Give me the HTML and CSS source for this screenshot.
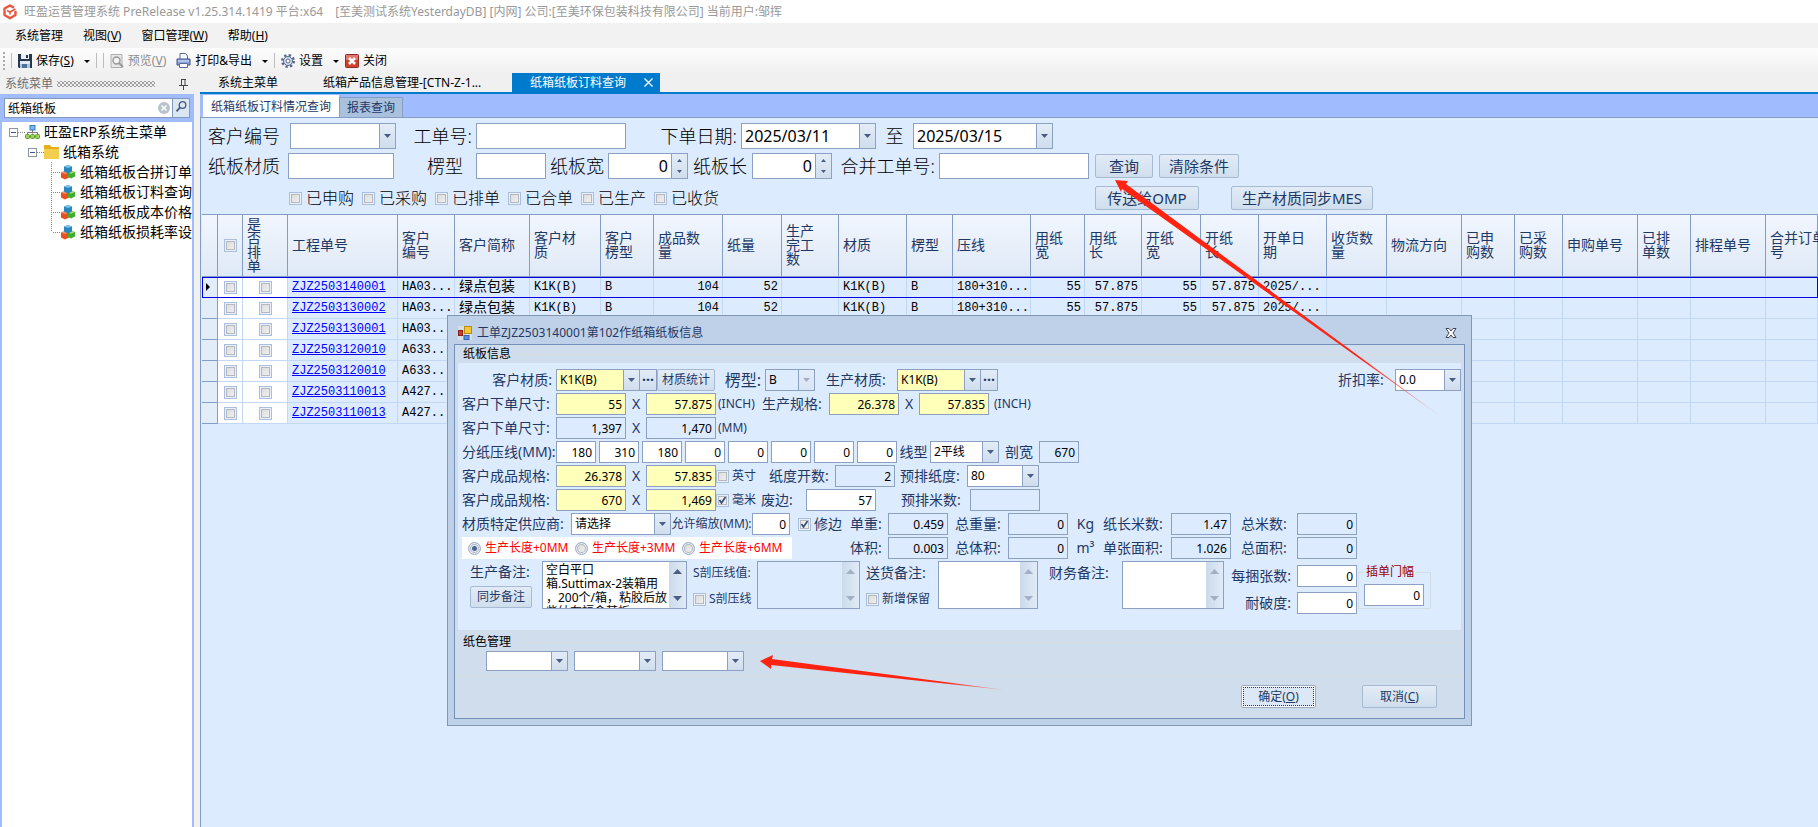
FILE: index.html
```html
<!DOCTYPE html>
<html lang="zh-CN">

<head>
  <meta charset="UTF-8">
  <meta name="viewport" content="width=device-width, initial-scale=1.0">
  <title>旺盈运营管理系统</title>
  <link rel="stylesheet" href="styles.css">
</head>

<body>
  <svg class="sprite" aria-hidden="true">
    <symbol id="cubes" viewBox="0 0 16 16">
      <path d="M1 8.5 5 7l4 1.5v5L5 15.5 1 13.5z" fill="#e8501f" />
      <path d="M1 8.5 5 7l4 1.5-4 1.7z" fill="#f98b5c" />
      <path d="M8 8.5 11.500 7 15 8v4.500L11 14.500 8 13z" fill="#3fae2a" />
      <path d="M8 8.500 11.500 7 15 8l-4 1.700z" fill="#a5e07a" />
      <path d="M4 2.500 8 1l4 1.500V7.500L8 9.500 4 7.500z" fill="#2a86bd" />
      <path d="M4 2.500 8 1l4 1.500-4 1.500z" fill="#79c4ea" />
    </symbol>
  </svg>

  <header class="titlebar">
    <svg class="logo" width="16" height="16" viewBox="0 0 16 16">
      <path d="M12 3.700 8 1.500 2.500 4.500V11L8 14.300l5.500-3.300V7" fill="none" stroke="#e9563c" stroke-width="2.400" stroke-linejoin="round" />
      <path d="M13.500 5 8 8 5 6.500M8 8v2.500" fill="none" stroke="#e9563c" stroke-width="1.600" />
    </svg>
    <span>旺盈运营管理系统 PreRelease v1.25.314.1419 平台:x64</span>
    <span>[至美测试系统YesterdayDB] [内网] 公司:[至美环保包装科技有限公司] 当前用户:邹挥</span>
  </header>

  <nav class="menubar">
    <a href="#">系统管理</a>
    <a href="#">视图(<u>V</u>)</a>
    <a href="#">窗口管理(<u>W</u>)</a>
    <a href="#">帮助(<u>H</u>)</a>
  </nav>

  <div class="toolbar">
    <i class="grip"></i>
    <i class="sep"></i>
    <button>
      <svg width="14" height="14" viewBox="0 0 14 14"><path d="M0 0h14v14H1l-1-1z" fill="#27384f" /><path d="M3 0h8v5H3z" fill="#e9f0f7" /><path d="M8 1h2v3H8z" fill="#27384f" /><path d="M2 7h10v7H2z" fill="#a9c6e6" /><path d="M2 7h10v3H2z" fill="#dfeaf6" /><path d="M4 10h5v4H4z" fill="#4d6f98" /></svg>
      保存(<u>S</u>)
    </button>
    <i class="caret"></i>
    <i class="sep"></i>
    <i class="sep"></i>
    <button class="dim">
      <svg width="14" height="14" viewBox="0 0 14 14"><path d="M1 .5h11v13H1z" fill="#e8e8e8" stroke="#b0b0b0" /><circle cx="6.500" cy="6.500" r="3.500" fill="#f4f4f4" stroke="#999" stroke-width="1.400" /><path d="m9 9 4 4" stroke="#999" stroke-width="2" /></svg>
      预览(<u>V</u>)
    </button>
    <button class="print">
      <svg width="15" height="15" viewBox="0 0 15 15"><path d="M4 .5h5.500L11.500 3v4H4z" fill="#f6f9ff" stroke="#5b6c96" /><path d="M1 6h13v6H1z" fill="#8aa5dc" stroke="#3f5288" /><path d="M2 8h11" stroke="#dbe6fb" /><path d="M3.500 10.500h8v4h-8z" fill="#fff" stroke="#5b6c96" /></svg>
      打印&amp;导出
    </button>
    <i class="caret"></i>
    <i class="sep"></i>
    <button>
      <svg width="14" height="14" viewBox="0 0 14 14"><circle cx="7" cy="7" r="5.800" fill="none" stroke="#56688a" stroke-width="2.400" stroke-dasharray="2.300 2.255" /><circle cx="7" cy="7" r="4.500" fill="#d5dff0" stroke="#56688a" /><circle cx="7" cy="7" r="2" fill="#fff" stroke="#56688a" /></svg>
      设置
    </button>
    <i class="caret"></i>
    <button>
      <svg width="14" height="14" viewBox="0 0 14 14"><rect x=".5" y=".5" width="13" height="13" rx="1" fill="#d0402f" stroke="#8f2b22" /><path d="M1 1h12v5H1z" fill="#e0776a" /><path d="m4 4 6 6m0-6-6 6" stroke="#fff" stroke-width="2.600" /></svg>
      关闭
    </button>
  </div>

  <div class="workspace">
    <aside class="dock">
      <div class="dock-head">
        <span>系统菜单</span>
        <i class="dots"></i>
        <svg width="9" height="11" viewBox="0 0 9 11"><path d="M2.500 0v6M6 0v6M2 .5h5M0 6.500h9M4.500 7v4" stroke="#444" fill="none" /></svg>
      </div>
      <div class="dock-body">
        <div class="search">
          <input type="text" value="纸箱纸板" aria-label="搜索菜单">
          <svg width="12" height="12" viewBox="0 0 12 12"><circle cx="6" cy="6" r="6" fill="#b9c2cf" /><path d="m3.500 3.500 5 5m0-5-5 5" stroke="#fff" stroke-width="1.500" /></svg>
          <button aria-label="查找"><svg width="11" height="11" viewBox="0 0 11 11"><circle cx="6.500" cy="4" r="3.300" fill="none" stroke="#44597c" stroke-width="1.300" /><path d="M4 6.500.5 10.300" stroke="#44597c" stroke-width="1.800" /></svg></button>
        </div>
        <div class="tree">
          <div class="node">
            <i class="toggle"></i><i class="twig"></i>
            <svg width="15" height="14" viewBox="0 0 15 14"><path d="M7.500 5v3.500M2.500 10V7.500h10V10" fill="none" stroke="#777" /><rect x="5" y=".5" width="5" height="4.500" fill="#7ab8f5" stroke="#3b78c4" /><rect x=".5" y="9.500" width="4" height="4" rx="1" fill="#9fd25c" stroke="#5d9a2b" /><rect x="5.500" y="9.500" width="4" height="4" rx="1" fill="#9fd25c" stroke="#5d9a2b" /><rect x="10.500" y="9.500" width="4" height="4" rx="1" fill="#9fd25c" stroke="#5d9a2b" /></svg>
            <span>旺盈ERP系统主菜单</span>
          </div>
          <div class="node sub">
            <i class="toggle"></i><i class="twig"></i>
            <svg width="15" height="14" viewBox="0 0 15 14"><path d="M0 0h6l1.500 2H15v3H0z" fill="#e5ae1c" /><path d="M0 4h15v10H0z" fill="#f3cd4d" /></svg>
            <span>纸箱系统</span>
          </div>
          <ul class="leaves">
            <li class="node"><i class="twig"></i><svg width="16" height="16"><use href="#cubes" /></svg><span>纸箱纸板合拼订单</span></li>
            <li class="node"><i class="twig"></i><svg width="16" height="16"><use href="#cubes" /></svg><span>纸箱纸板订料查询</span></li>
            <li class="node"><i class="twig"></i><svg width="16" height="16"><use href="#cubes" /></svg><span>纸箱纸板成本价格</span></li>
            <li class="node"><i class="twig"></i><svg width="16" height="16"><use href="#cubes" /></svg><span>纸箱纸板损耗率设</span></li>
          </ul>
        </div>
      </div>
    </aside>

    <main class="content">
      <nav class="tabs">
        <a href="#" class="tab tab-main">系统主菜单</a>
        <a href="#" class="tab tab-product">纸箱产品信息管理-[CTN-Z-1...</a>
        <a href="#" class="tab active">纸箱纸板订料查询
          <svg width="9" height="9" viewBox="0 0 9 9"><path d="m.5.5 8 8m0-8-8 8" stroke="#fff" stroke-width="1.300" /></svg>
        </a>
      </nav>
      <nav class="subtabs">
        <a href="#" class="active">纸箱纸板订料情况查询</a>
        <a href="#">报表查询</a>
      </nav>

      <form class="page">
        <section class="filters">
          <div class="filter-row">
            <label class="w82" for="f-cust">客户编号</label>
            <select id="f-cust" class="w106"><option></option></select>
            <label class="w80 end" for="f-order">工单号:</label>
            <input id="f-order" class="w150" type="text">
            <label class="w115 end" for="f-from">下单日期:</label>
            <input id="f-from" class="combo w135" type="text" value="2025/03/11">
            <label class="w37 mid" for="f-to">至</label>
            <input id="f-to" class="combo w140" type="text" value="2025/03/15">
          </div>
          <div class="filter-row">
            <label class="w80" for="f-mat">纸板材质</label>
            <input id="f-mat" class="w106" type="text">
            <label class="w82 flute" for="f-flute">楞型</label>
            <input id="f-flute" class="w70" type="text">
            <label class="w62 mid" for="f-width">纸板宽</label>
            <input id="f-width" class="spin w80" type="text" value="0">
            <label class="w64 mid" for="f-length">纸板长</label>
            <input id="f-length" class="spin w80" type="text" value="0">
            <label class="w107 end" for="f-merge">合并工单号:</label>
            <input id="f-merge" class="w150" type="text">
            <button type="button" class="btn query">查询</button>
            <button type="button" class="btn clear">清除条件</button>
          </div>
          <div class="filter-row last">
            <div class="checks">
              <label><input type="checkbox">已申购</label>
              <label><input type="checkbox">已采购</label>
              <label><input type="checkbox">已排单</label>
              <label><input type="checkbox">已合单</label>
              <label><input type="checkbox">已生产</label>
              <label><input type="checkbox">已收货</label>
            </div>
            <button type="button" class="btn omp">传送给OMP</button>
            <button type="button" class="btn mes">生产材质同步MES</button>
          </div>
        </section>

        <table class="grid">
          <colgroup>
            <col class="w16"><col class="w25"><col class="w45"><col class="w110"><col class="w57"><col class="w75"><col class="w71"><col class="w53"><col class="w69"><col class="w59"><col class="w57"><col class="w68"><col class="w46"><col class="w78"><col class="w54"><col class="w57"><col class="w59"><col class="w58"><col class="w68"><col class="w60"><col class="w75"><col class="w53"><col class="w48"><col class="w75"><col class="w53"><col class="w75"><col>
          </colgroup>
          <thead>
            <tr>
              <th></th>
              <th class="pick"><input type="checkbox" aria-label="全选"></th>
              <th>是<br>否<br>排<br>单</th>
              <th>工程单号</th>
              <th>客户<br>编号</th>
              <th>客户简称</th>
              <th>客户材<br>质</th>
              <th>客户<br>楞型</th>
              <th>成品数<br>量</th>
              <th>纸量</th>
              <th>生产<br>完工<br>数</th>
              <th>材质</th>
              <th>楞型</th>
              <th>压线</th>
              <th>用纸<br>宽</th>
              <th>用纸<br>长</th>
              <th>开纸<br>宽</th>
              <th>开纸<br>长</th>
              <th>开单日<br>期</th>
              <th>收货数<br>量</th>
              <th>物流方向</th>
              <th>已申<br>购数</th>
              <th>已采<br>购数</th>
              <th>申购单号</th>
              <th>已排<br>单数</th>
              <th>排程单号</th>
              <th>合并订单<br>号</th>
            </tr>
          </thead>
          <tbody>
            <tr class="current">
              <td><i class="marker"></i></td>
              <td class="pick"><input type="checkbox" aria-label="选择"></td>
              <td class="pick"><input type="checkbox" aria-label="是否排单"></td>
              <td><a href="#">ZJZ2503140001</a></td><td>HA03...</td><td>绿点包装</td><td>K1K(B)</td><td>B</td><td class="num">104</td><td class="num">52</td><td></td><td>K1K(B)</td><td>B</td><td>180+310...</td><td class="num">55</td><td class="num">57.875</td><td class="num">55</td><td class="num">57.875</td><td>2025/...</td><td></td><td></td><td></td><td></td><td></td><td></td><td></td><td></td>
            </tr>
            <tr>
              <td></td>
              <td class="pick"><input type="checkbox" aria-label="选择"></td>
              <td class="pick"><input type="checkbox" aria-label="是否排单"></td>
              <td><a href="#">ZJZ2503130002</a></td><td>HA03...</td><td>绿点包装</td><td>K1K(B)</td><td>B</td><td class="num">104</td><td class="num">52</td><td></td><td>K1K(B)</td><td>B</td><td>180+310...</td><td class="num">55</td><td class="num">57.875</td><td class="num">55</td><td class="num">57.875</td><td>2025/...</td><td></td><td></td><td></td><td></td><td></td><td></td><td></td><td></td>
            </tr>
            <tr>
              <td></td>
              <td class="pick"><input type="checkbox" aria-label="选择"></td>
              <td class="pick"><input type="checkbox" aria-label="是否排单"></td>
              <td><a href="#">ZJZ2503130001</a></td><td>HA03...</td><td></td><td></td><td></td><td></td><td></td><td></td><td></td><td></td><td></td><td></td><td></td><td></td><td></td><td></td><td></td><td></td><td></td><td></td><td></td><td></td><td></td><td></td>
            </tr>
            <tr>
              <td></td>
              <td class="pick"><input type="checkbox" aria-label="选择"></td>
              <td class="pick"><input type="checkbox" aria-label="是否排单"></td>
              <td><a href="#">ZJZ2503120010</a></td><td>A633...</td><td></td><td></td><td></td><td></td><td></td><td></td><td></td><td></td><td></td><td></td><td></td><td></td><td></td><td></td><td></td><td></td><td></td><td></td><td></td><td></td><td></td><td></td>
            </tr>
            <tr>
              <td></td>
              <td class="pick"><input type="checkbox" aria-label="选择"></td>
              <td class="pick"><input type="checkbox" aria-label="是否排单"></td>
              <td><a href="#">ZJZ2503120010</a></td><td>A633...</td><td></td><td></td><td></td><td></td><td></td><td></td><td></td><td></td><td></td><td></td><td></td><td></td><td></td><td></td><td></td><td></td><td></td><td></td><td></td><td></td><td></td><td></td>
            </tr>
            <tr>
              <td></td>
              <td class="pick"><input type="checkbox" aria-label="选择"></td>
              <td class="pick"><input type="checkbox" aria-label="是否排单"></td>
              <td><a href="#">ZJZ2503110013</a></td><td>A427...</td><td></td><td></td><td></td><td></td><td></td><td></td><td></td><td></td><td></td><td></td><td></td><td></td><td></td><td></td><td></td><td></td><td></td><td></td><td></td><td></td><td></td><td></td>
            </tr>
            <tr>
              <td></td>
              <td class="pick"><input type="checkbox" aria-label="选择"></td>
              <td class="pick"><input type="checkbox" aria-label="是否排单"></td>
              <td><a href="#">ZJZ2503110013</a></td><td>A427...</td><td></td><td></td><td></td><td></td><td></td><td></td><td></td><td></td><td></td><td></td><td></td><td></td><td></td><td></td><td></td><td></td><td></td><td></td><td></td><td></td><td></td><td></td>
            </tr>
          </tbody>
        </table>
      </form>
    </main>
  </div>

  <form class="dialog" role="dialog" aria-labelledby="dlg-title">
    <div class="dialog-title">
      <svg width="14" height="14" viewBox="0 0 14 14"><path d="M0 0h14v14H0z" fill="#d9dde4" /><rect x="6.500" y=".5" width="7" height="7" fill="#f6c534" stroke="#b98a12" /><rect x=".5" y="4.500" width="4" height="5" fill="#c8402c" stroke="#8d2217" /><rect x="6" y="9.500" width="5" height="4" fill="#5a8fe0" stroke="#3566b5" /></svg>
      <span id="dlg-title">工单ZJZ2503140001第102作纸箱纸板信息</span>
      <button type="button" aria-label="关闭"><svg width="12" height="10" viewBox="0 0 12 10"><path d="M1 .5h3l2 2.500 2-2.500h3L8 5l3 4.500H8L6 7 4 9.500H1L4 5z" fill="#fff" stroke="#3c4658" /></svg></button>
    </div>

    <div class="dialog-body">
      <h2>纸板信息</h2>
      <div class="fields">
        <div class="row">
          <label class="w94 end" for="d-mat">客户材质:</label>
          <select id="d-mat" class="yellow w84"><option>K1K(B)</option></select>
          <button type="button" class="more" aria-label="更多">···</button>
          <button type="button" class="btn stat">材质统计</button>
          <label class="w50 end big" for="d-flute">楞型:</label>
          <select id="d-flute" class="w50" disabled><option>B</option></select>
          <label class="w82 mid" for="d-pmat">生产材质:</label>
          <select id="d-pmat" class="yellow w84"><option>K1K(B)</option></select>
          <button type="button" class="more" aria-label="更多">···</button>
          <label class="w57 push" for="d-disc">折扣率:</label>
          <select id="d-disc" class="w66"><option>0.0</option></select>
        </div>
        <div class="row">
          <label class="w94" for="d-inw">客户下单尺寸:</label>
          <input id="d-inw" class="yellow w70" type="text" value="55">
          <span class="times">X</span>
          <input class="yellow w70" type="text" value="57.875" aria-label="下单长(INCH)">
          <span class="unit w46">(INCH)</span>
          <label class="w67" for="d-spec">生产规格:</label>
          <input id="d-spec" class="yellow w70" type="text" value="26.378">
          <span class="times">X</span>
          <input class="yellow w70" type="text" value="57.835" aria-label="生产规格长">
          <span class="unit pad">(INCH)</span>
        </div>
        <div class="row">
          <label class="w94" for="d-mmw">客户下单尺寸:</label>
          <input id="d-mmw" class="w70" type="text" value="1,397" readonly>
          <span class="times">X</span>
          <input class="w70" type="text" value="1,470" aria-label="下单长(MM)" readonly>
          <span class="unit">(MM)</span>
        </div>
        <div class="row">
          <label class="w94" for="d-c1">分纸压线(MM):</label>
          <div class="creases">
            <input id="d-c1" type="text" value="180">
            <input type="text" value="310" aria-label="压线2">
            <input type="text" value="180" aria-label="压线3">
            <input type="text" value="0" aria-label="压线4">
            <input type="text" value="0" aria-label="压线5">
            <input type="text" value="0" aria-label="压线6">
            <input type="text" value="0" aria-label="压线7">
            <input type="text" value="0" aria-label="压线8">
          </div>
          <label class="w33 mid" for="d-line">线型</label>
          <select id="d-line" class="w69"><option>2平线</option></select>
          <label class="w40 mid" for="d-cut">剖宽</label>
          <input id="d-cut" class="w40" type="text" value="670" readonly>
        </div>
        <div class="row">
          <label class="w94" for="d-fiw">客户成品规格:</label>
          <input id="d-fiw" class="yellow w70" type="text" value="26.378">
          <span class="times">X</span>
          <input class="yellow w70" type="text" value="57.835" aria-label="成品长(英寸)">
          <label class="check w53"><input type="checkbox">英寸</label>
          <label class="w66" for="d-open">纸度开数:</label>
          <input id="d-open" class="w60" type="text" value="2" readonly>
          <label class="w72 lead5" for="d-pre">预排纸度:</label>
          <select id="d-pre" class="w72"><option>80</option></select>
        </div>
        <div class="row">
          <label class="w94" for="d-fmw">客户成品规格:</label>
          <input id="d-fmw" class="yellow w70" type="text" value="670">
          <span class="times">X</span>
          <input class="yellow w70" type="text" value="1,469" aria-label="成品长(毫米)">
          <label class="check w45"><input type="checkbox" checked>毫米</label>
          <label class="w45" for="d-waste">废边:</label>
          <input id="d-waste" class="w70" type="text" value="57">
          <label class="w94 lead25" for="d-prem">预排米数:</label>
          <input id="d-prem" class="w70" type="text" readonly>
        </div>
        <div class="row">
          <label class="w109" for="d-sup">材质特定供应商:</label>
          <select id="d-sup" class="w100"><option>请选择</option></select>
          <label class="w81 mid small" for="d-scale">允许缩放(MM):</label>
          <input id="d-scale" class="w38" type="text" value="0">
          <label class="check trim w60"><input type="checkbox" checked>修边</label>
          <label class="w38" for="d-wt">单重:</label>
          <input id="d-wt" class="w60" type="text" value="0.459" readonly>
          <label class="w60 mid" for="d-twt">总重量:</label>
          <input id="d-twt" class="w60" type="text" value="0" readonly>
          <span class="w35 mid">Kg</span>
          <label class="w68" for="d-len">纸长米数:</label>
          <input id="d-len" class="w60" type="text" value="1.47" readonly>
          <label class="w66 mid" for="d-tlen">总米数:</label>
          <input id="d-tlen" class="w60" type="text" value="0" readonly>
        </div>
        <div class="row">
          <div class="radios">
            <label><input type="radio" name="extra" checked>生产长度+0MM</label>
            <label><input type="radio" name="extra">生产长度+3MM</label>
            <label><input type="radio" name="extra">生产长度+6MM</label>
          </div>
          <label class="w38" for="d-vol">体积:</label>
          <input id="d-vol" class="w60" type="text" value="0.003" readonly>
          <label class="w60 mid" for="d-tvol">总体积:</label>
          <input id="d-tvol" class="w60" type="text" value="0" readonly>
          <span class="w35 mid">m³</span>
          <label class="w68" for="d-area">单张面积:</label>
          <input id="d-area" class="w60" type="text" value="1.026" readonly>
          <label class="w66 mid" for="d-tarea">总面积:</label>
          <input id="d-tarea" class="w60" type="text" value="0" readonly>
        </div>
        <div class="row notes">
          <div class="stack w80 mid">
            <label for="d-note">生产备注:</label>
            <button type="button" class="btn sync">同步备注</button>
          </div>
          <textarea id="d-note" class="w145">空白平口
箱.Suttimax-2装箱用
，200个/箱，粘胶后放
些纳在福盒某板</textarea>
          <div class="stack w70 small">
            <label for="d-s">S剖压线值:</label>
            <label class="check"><input type="checkbox">S剖压线</label>
          </div>
          <textarea id="d-s" class="off w103" disabled></textarea>
          <div class="stack w78">
            <label for="d-ship">送货备注:</label>
            <label class="check"><input type="checkbox">新增保留</label>
          </div>
          <textarea id="d-ship" class="off w100"></textarea>
          <div class="stack wide w84">
            <label for="d-fin">财务备注:</label>
          </div>
          <textarea id="d-fin" class="off w102"></textarea>
          <div class="pairs">
            <label for="d-pack">每捆张数:</label><input id="d-pack" class="w60" type="text" value="0">
            <label for="d-burst">耐破度:</label><input id="d-burst" class="w60" type="text" value="0">
          </div>
          <fieldset>
            <legend>插单门幅</legend>
            <input class="w60" type="text" value="0" aria-label="插单门幅">
          </fieldset>
        </div>
      </div>

      <h2 class="second">纸色管理</h2>
      <div class="colors">
        <select class="w82" aria-label="面纸颜色"><option></option></select>
        <select class="w82" aria-label="芯纸颜色"><option></option></select>
        <select class="w82" aria-label="里纸颜色"><option></option></select>
      </div>
      <div class="dialog-foot">
        <button type="button" class="btn ok"><span>确定(<u>O</u>)</span></button>
        <button type="button" class="btn cancel">取消(<u>C</u>)</button>
      </div>
    </div>
  </form>

  <!-- pointers to the query button and the paper colour row -->
  <svg class="pointers" width="1818" height="827" viewBox="0 0 1818 827" aria-hidden="true">
    <defs>
      <linearGradient id="fade1" gradientUnits="userSpaceOnUse" x1="1115" y1="180" x2="1440" y2="416">
        <stop offset=".75" stop-color="#ff2312" />
        <stop offset="1" stop-color="#ff2312" stop-opacity=".3" />
      </linearGradient>
      <linearGradient id="fade2" gradientUnits="userSpaceOnUse" x1="760" y1="661" x2="1005" y2="690">
        <stop offset=".75" stop-color="#ff2312" />
        <stop offset="1" stop-color="#ff2312" stop-opacity=".3" />
      </linearGradient>
    </defs>
    <path fill="url(#fade1)" d="M1115 180 1128 181 1126 184 1440 416 1122 189 1121 192z" />
    <path fill="url(#fade2)" d="M760 661 773 655 772 659 1005 690 771 665 771 669z" />
  </svg>
</body>

</html>
```

FILE: styles.css
```css
* {
  box-sizing: border-box;
  margin: 0;
}

body {
  display: flex;
  flex-direction: column;
  min-height: 100vh;
  overflow: hidden;
  font-family: "Noto Sans", "Noto Sans CJK SC", sans-serif;
  font-size: 12px;
  line-height: 16px;
  color: #000;
  background: #f0f0f0;
}

a {
  color: inherit;
  text-decoration: none;
}

svg {
  flex: none;
}

button,
input,
select,
textarea {
  font: inherit;
  color: inherit;
}

.sprite {
  position: absolute;
  width: 0;
  height: 0;
}

/* window chrome */

.titlebar {
  display: flex;
  align-items: center;
  gap: 6px;
  height: 23px;
  padding-left: 2px;
  background: #fff;
  color: #999;
  white-space: pre;
}

.titlebar span + span {
  margin-left: 6px;
}

.menubar {
  display: flex;
  align-items: center;
  gap: 20px;
  height: 25px;
  padding-left: 15px;
  background: #f2f2f2;
}

.toolbar {
  display: flex;
  align-items: center;
  height: 25px;
  background: linear-gradient(#fdfdfd, #f0f0f0);
}

.toolbar button {
  display: flex;
  align-items: center;
  padding: 0;
  border: 0;
  background: none;
  white-space: nowrap;
}

.toolbar button svg {
  margin-right: 4px;
}

.toolbar .dim {
  color: #8d8d8d;
}

.toolbar .print {
  margin-left: 10px;
}

.grip {
  width: 2px;
  height: 18px;
  margin: 0 6px 0 3px;
  background: repeating-linear-gradient(#aaa 0 2px, transparent 2px 4px);
}

.sep {
  width: 1px;
  height: 15px;
  margin: 0 6px 0 0;
  background: #bdbdbd;
}

.caret {
  margin: 2px 6px 0 10px;
  border: 3px solid transparent;
  border-top-color: #000;
  border-bottom-width: 0;
}

.workspace {
  display: flex;
  flex: 1;
}

/* left dock */

.dock {
  display: flex;
  flex-direction: column;
  width: 194px;
}

.dock-head {
  display: flex;
  align-items: center;
  gap: 4px;
  height: 21px;
  padding: 1px 6px 0 5px;
  color: #6d6d6d;
}

.dots {
  flex: 1;
  height: 6px;
  margin-right: 20px;
  background:
    conic-gradient(#a5a5a5 25%, transparent 0) 0 0 / 4px 4px,
    conic-gradient(#a5a5a5 25%, transparent 0) 2px 2px / 4px 4px;
  background:
    radial-gradient(#a0a0a0 0 1px, transparent 1px) 0 0 / 4px 4px,
    radial-gradient(#a0a0a0 0 1px, transparent 1px) 2px 2px / 4px 4px;
}

.dock-body {
  display: flex;
  flex: 1;
  flex-direction: column;
  padding: 4px 2px 0;
  background: #a0bcff;
}

.search {
  display: flex;
  align-items: center;
  height: 20px;
  margin: 0 2px 4px;
  border: 1px solid #8398bd;
  background: #fff;
}

.search input {
  flex: 1;
  width: 0;
  height: 18px;
  padding: 0 3px;
  border: 0;
  text-align: left;
}

.search button {
  width: 17px;
  height: 18px;
  margin-left: 2px;
  padding: 0;
  border: 0;
  border-left: 1px solid #8398bd;
  background: #dbe6f3;
}

.tree {
  flex: 1;
  overflow: hidden;
  background: #fff;
  font-size: 14px;
}

.node {
  display: flex;
  align-items: center;
  height: 20px;
  padding-left: 7px;
  white-space: nowrap;
}

.node.sub {
  padding-left: 26px;
}

.node span {
  padding-left: 4px;
}

.toggle {
  width: 9px;
  height: 9px;
  border: 1px solid #8a94a3;
  background: linear-gradient(#3a5a9a, #3a5a9a) center / 5px 1px no-repeat #fff;
}

.twig {
  width: 7px;
  height: 1px;
  background: repeating-linear-gradient(90deg, #888 0 1px, transparent 1px 2px);
}

.leaves {
  margin-left: 49px;
  padding: 0;
  list-style: none;
  background: repeating-linear-gradient(#888 0 1px, transparent 1px 2px) 0 0 / 1px 70px no-repeat;
}

.leaves .node {
  padding-left: 2px;
}

.leaves .twig {
  width: 9px;
}

/* document tabs */

.content {
  display: flex;
  flex: 1;
  flex-direction: column;
  min-width: 0;
  margin-left: 6px;
}

.tabs {
  display: flex;
  height: 21px;
  border-bottom: 2px solid #007acc;
}

.tab {
  display: flex;
  align-items: center;
  justify-content: space-between;
  padding-left: 18px;
  white-space: nowrap;
}

.tab-main {
  width: 105px;
}

.tab-product {
  width: 207px;
}

.tab.active {
  width: 148px;
  padding-right: 7px;
  background: #007acc;
  color: #fff;
}

.subtabs {
  display: flex;
  align-items: flex-end;
  height: 24px;
  padding-left: 3px;
  border-bottom: 1px solid #849dc4;
  background: #a0bcff;
  color: #1f3864;
}

.subtabs a {
  height: 20px;
  padding: 2px 7px;
  border: 1px solid #849dc4;
  border-bottom: 0;
  background: #a9c1dd;
}

.subtabs a.active {
  height: 22px;
  padding: 3px 7px;
  border-color: #fff;
  background: #fff;
}

.page {
  flex: 1;
  padding-left: 1px;
  border-left: 1px solid #849dc4;
  background: #ddebff;
}

/* form controls */

input,
select,
textarea {
  height: 22px;
  padding: 0 3px;
  border: 1px solid #8ba0c2;
  border-radius: 0;
  outline: 0;
  background-color: #fff;
}

select,
.combo {
  appearance: none;
  background-image:
    url("data:image/svg+xml,%3Csvg xmlns='http://www.w3.org/2000/svg' width='7' height='4'%3E%3Cpath d='M0 0h7L3.500 4z' fill='%234a5d83'/%3E%3C/svg%3E"),
    linear-gradient(#8ba0c2, #8ba0c2),
    linear-gradient(#e3edf8, #cfdded);
  background-position: right 4px center, right 15px top, right top;
  background-size: 7px 4px, 1px 100%, 15px 100%;
  background-repeat: no-repeat;
}

select:disabled {
  opacity: 1;
  color: #000;
  background-color: #ddebff;
  background-image:
    url("data:image/svg+xml,%3Csvg xmlns='http://www.w3.org/2000/svg' width='7' height='4'%3E%3Cpath d='M0 0h7L3.500 4z' fill='%23a3b0c4'/%3E%3C/svg%3E"),
    linear-gradient(#8ba0c2, #8ba0c2),
    linear-gradient(#e3edf8, #d8e5f5);
}

input[readonly],
textarea:disabled {
  background-color: #ddebff;
}

.spin {
  background-image:
    url("data:image/svg+xml,%3Csvg xmlns='http://www.w3.org/2000/svg' width='5' height='14'%3E%3Cpath d='M0 3h5L2.500 0zM0 11h5L2.500 14z' fill='%234a5d83'/%3E%3C/svg%3E"),
    linear-gradient(#8ba0c2, #8ba0c2),
    linear-gradient(#e3edf8, #cfdded);
  background-position: right 5px center, right 15px top, right top;
  background-size: 5px 14px, 1px 100%, 15px 100%;
  background-repeat: no-repeat;
  text-align: right;
}

input[type="checkbox"],
input[type="radio"] {
  flex: none;
  appearance: none;
  width: 13px;
  height: 13px;
  padding: 0;
  border: 1px solid #aabfdf;
  background: linear-gradient(135deg, #d8d8d8, #f4f4f4);
  box-shadow: inset 0 0 0 1px #eaf1fb, inset 0 0 0 2px #b5b8bf;
}

input[type="checkbox"]:checked {
  background: url("data:image/svg+xml,%3Csvg xmlns='http://www.w3.org/2000/svg' width='9' height='9'%3E%3Cpath d='M1.500 4 3.500 7 7.500 1' fill='none' stroke='%233a5078' stroke-width='1.800'/%3E%3C/svg%3E") center no-repeat #eee;
}

input[type="radio"] {
  border-color: #98a9c4;
  border-radius: 50%;
}

input[type="radio"]:checked {
  background: radial-gradient(#4a6590 0 2px, #e6edf6 3px);
}

.btn {
  padding: 0;
  border: 1px solid #a8b9d2;
  border-radius: 2px;
  background: linear-gradient(#e2ecf8, #cfdeed);
  color: #1f3864;
  text-align: center;
  white-space: nowrap;
}

.end {
  text-align: right;
  padding-right: 4px;
}

.mid {
  text-align: center;
}

/* query conditions */

.filters {
  display: flex;
  flex-direction: column;
  gap: 4px;
  padding: 5px 0 4px 6px;
  font-size: 16px;
}

.filter-row {
  display: flex;
  align-items: center;
  line-height: 22px;
  white-space: nowrap;
}

.filter-row.last {
  margin-top: 3px;
}

.filter-row > label {
  flex: none;
  font-size: 18px;
  font-weight: 300;
}

.filter-row > input,
.filter-row > select {
  flex: none;
  height: 26px;
}

.filter-row .spin {
  padding-right: 19px;
}

.filter-row .btn {
  flex: none;
  height: 24px;
  font-size: 15px;
  line-height: 20px;
}

.flute {
  padding-left: 33px;
}

.query {
  width: 58px;
  margin: 0 6px;
}

.clear {
  width: 80px;
}

.omp {
  width: 104px;
}

.mes {
  width: 142px;
  margin-left: 32px;
}

.checks {
  display: flex;
  width: 887px;
  padding-left: 81px;
}

.checks label {
  display: flex;
  align-items: center;
  gap: 4px;
  width: 73px;
  font-size: 16px;
  font-weight: 300;
}

/* order grid */

.grid {
  width: 100%;
  table-layout: fixed;
  border-collapse: separate;
  border-spacing: 0;
  border-top: 1px solid #849dc4;
  font-family: "Liberation Mono", "Noto Sans CJK SC", monospace;
}

.grid th {
  height: 62px;
  padding: 0 0 0 4px;
  border-right: 1px solid #849dc4;
  border-bottom: 1px solid #849dc4;
  background: linear-gradient(#f1f6fe, #dfe9f6);
  color: #1f3864;
  font-size: 14px;
  font-weight: 400;
  line-height: 14px;
  text-align: left;
  white-space: nowrap;
}

.grid td {
  height: 21px;
  padding: 0 3px 0 4px;
  border-right: 1px solid #c3d8f4;
  border-bottom: 1px solid #c3d8f4;
  line-height: 18px;
  white-space: nowrap;
}

.grid td:nth-child(6) {
  font-size: 14px;
}

.grid td:first-child {
  border-color: #849dc4;
  background: #e3edf9;
}

.grid .pick {
  padding: 0;
  text-align: center;
}

.grid td.pick {
  background: #fff;
}

.grid .pick input {
  display: block;
  margin: 0 auto;
}

.grid .num {
  text-align: right;
}

.grid td a {
  color: #00f;
  text-decoration: underline;
}

.current {
  outline: 1px solid #0000e0;
  outline-offset: -1px;
}

.marker {
  display: block;
  width: 0;
  border: 4px solid transparent;
  border-left-color: #000;
  border-right-width: 0;
}

/* board information dialog */

.dialog {
  position: absolute;
  top: 315px;
  left: 447px;
  width: 1025px;
  padding: 0 6px 6px;
  border: 1px solid #8397b3;
  background: #bfd1e8;
  color: #1f3864;
}

.dialog-title {
  display: flex;
  align-items: center;
  gap: 5px;
  height: 28px;
  padding: 6px 8px 0 4px;
}

.dialog-title button {
  display: flex;
  margin-left: auto;
  padding: 0;
  border: 0;
  background: none;
}

.dialog-body {
  padding: 0 3px;
  border: 1px solid #7391b8;
  background: #d0dded;
}

.dialog h2 {
  display: flex;
  align-items: center;
  gap: 4px;
  height: 18px;
  padding-left: 5px;
  font-size: 12px;
  font-weight: 400;
  color: #000;
}

.dialog h2::after {
  content: "";
  flex: 1;
  height: 1px;
  background: #dadde0;
}

.dialog h2.second {
  margin-top: 3px;
}

.fields {
  display: flex;
  flex-direction: column;
  gap: 2px;
  padding: 6px 0 16px 4px;
  background: #ddebff;
}

.row {
  display: flex;
  align-items: center;
  font-size: 14px;
  white-space: nowrap;
}

.row > *,
.creases input {
  flex: none;
}

.row input,
.row select,
.row textarea,
.row .btn {
  font-size: 12px;
}

.row input,
.row select,
.row textarea {
  color: #000;
}

.row input[type="text"] {
  text-align: right;
}

.row .yellow {
  background-color: #ffffb9;
}

.big {
  font-size: 16px;
}

.row .small,
.check,
.unit {
  font-size: 12px;
}

.push {
  margin-left: auto;
}

.lead5 {
  padding-left: 5px;
}

.lead25 {
  padding-left: 25px;
}

.more {
  width: 17px;
  height: 22px;
  padding: 0;
  border: 1px solid #8ba0c2;
  border-left: 0;
  background: linear-gradient(#e3edf8, #cfdded);
  font-weight: 700;
  line-height: 18px;
}

.stat {
  width: 58px;
  height: 22px;
}

.times {
  width: 20px;
  text-align: center;
}

.unit {
  padding-left: 2px;
}

.unit.pad {
  padding-left: 5px;
}

.creases {
  display: flex;
  gap: 3px;
}

.creases input {
  width: 40px;
}

.check {
  display: flex;
  align-items: center;
  gap: 3px;
}

.trim {
  padding-left: 8px;
  font-size: 14px;
}

.radios {
  display: flex;
  width: 330px;
  height: 22px;
  margin-right: 58px;
  padding-left: 6px;
  background: #fff;
  color: #f00;
  font-size: 12px;
}

.radios label {
  display: flex;
  align-items: center;
  gap: 4px;
  width: 107px;
}

.row.notes {
  align-items: flex-start;
}

.row textarea {
  height: 48px;
  padding: 1px 18px 0 3px;
  overflow: hidden;
  resize: none;
  line-height: 14px;
  background-image:
    url("data:image/svg+xml,%3Csvg xmlns='http://www.w3.org/2000/svg' width='9' height='5'%3E%3Cpath d='M0 5h9L4.500 0z' fill='%234a5d83'/%3E%3C/svg%3E"),
    url("data:image/svg+xml,%3Csvg xmlns='http://www.w3.org/2000/svg' width='9' height='5'%3E%3Cpath d='M0 0h9L4.500 5z' fill='%234a5d83'/%3E%3C/svg%3E"),
    linear-gradient(90deg, #cbdaeb, #e1ebf7);
  background-position: right 4px top 7px, right 4px bottom 7px, right top;
  background-size: 9px 5px, 9px 5px, 17px 100%;
  background-repeat: no-repeat;
}

.row textarea.off {
  background-image:
    url("data:image/svg+xml,%3Csvg xmlns='http://www.w3.org/2000/svg' width='9' height='5'%3E%3Cpath d='M0 5h9L4.500 0z' fill='%23a3b0c4'/%3E%3C/svg%3E"),
    url("data:image/svg+xml,%3Csvg xmlns='http://www.w3.org/2000/svg' width='9' height='5'%3E%3Cpath d='M0 0h9L4.500 5z' fill='%23a3b0c4'/%3E%3C/svg%3E"),
    linear-gradient(90deg, #cbdaeb, #e1ebf7);
}

.stack {
  display: flex;
  flex-direction: column;
  gap: 10px;
  padding: 4px 0 0 6px;
}

.stack .check {
  height: 16px;
}

.stack.mid {
  align-items: flex-start;
  gap: 6px;
  padding: 3px 0 0 8px;
}

.stack.wide {
  padding-left: 11px;
}

.sync {
  width: 62px;
  height: 22px;
}

.pairs {
  display: grid;
  grid-template-columns: 68px 60px;
  gap: 5px 0;
  align-items: center;
  padding: 4px 0 0;
  margin-left: 5px;
}

.pairs label {
  padding-right: 6px;
  text-align: right;
}

fieldset {
  min-width: 0;
  margin: 3px 0 0 1px;
  padding: 4px 6px 2px 5px;
  border: 1px solid #d4dce6;
}

legend {
  padding: 0 2px;
  color: #900;
  font-size: 12px;
}

.colors {
  display: flex;
  gap: 6px;
  padding: 0 0 4px 28px;
  border-bottom: 1px solid #dadde0;
}

.colors select {
  height: 20px;
}

.dialog-foot {
  display: flex;
  justify-content: flex-end;
  gap: 46px;
  padding: 9px 24px 10px 0;
}

.dialog-foot .btn {
  width: 75px;
  height: 23px;
}

.ok {
  border-color: #9aa9be;
  background: #fff;
}

.ok span {
  display: block;
  margin: 1px;
  border: 1px dotted #1f3864;
  background: #dce8f5;
  line-height: 17px;
}

.pointers {
  position: absolute;
  top: 0;
  left: 0;
  pointer-events: none;
}

/* control and column widths */

.w16 { width: 16px; }
.w25 { width: 25px; }
.w33 { width: 33px; }
.w35 { width: 35px; }
.w37 { width: 37px; }
.w38 { width: 38px; }
.w40 { width: 40px; }
.w45 { width: 45px; }
.w46 { width: 46px; }
.w48 { width: 48px; }
.w50 { width: 50px; }
.w53 { width: 53px; }
.w54 { width: 54px; }
.w57 { width: 57px; }
.w58 { width: 58px; }
.w59 { width: 59px; }
.w60 { width: 60px; }
.w62 { width: 62px; }
.w64 { width: 64px; }
.w66 { width: 66px; }
.w67 { width: 67px; }
.w68 { width: 68px; }
.w69 { width: 69px; }
.w70 { width: 70px; }
.w71 { width: 71px; }
.w72 { width: 72px; }
.w75 { width: 75px; }
.w78 { width: 78px; }
.w80 { width: 80px; }
.w81 { width: 81px; }
.w82 { width: 82px; }
.w84 { width: 84px; }
.w94 { width: 94px; }
.w100 { width: 100px; }
.w102 { width: 102px; }
.w103 { width: 103px; }
.w106 { width: 106px; }
.w107 { width: 107px; }
.w109 { width: 109px; }
.w110 { width: 110px; }
.w115 { width: 115px; }
.w135 { width: 135px; }
.w140 { width: 140px; }
.w145 { width: 145px; }
.w150 { width: 150px; }
```
